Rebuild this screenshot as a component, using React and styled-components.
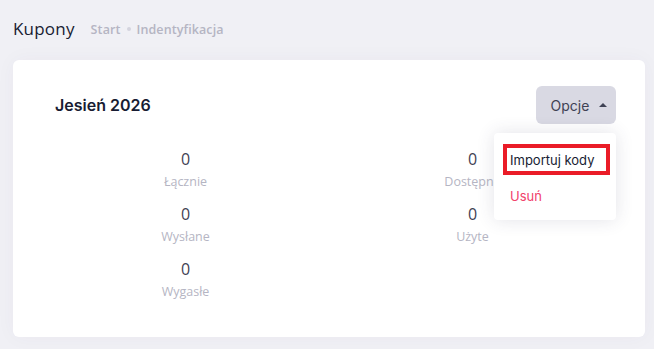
import React from "react";
import styled, { createGlobalStyle } from "styled-components";

const Global = createGlobalStyle`
  html, body { margin: 0; padding: 0; background: #f0f0f5; }
  body { font-family: "Open Sans", "Noto Sans", sans-serif; }
  * { box-sizing: border-box; }
`;

const Page = styled.div`
  width: 654px;
  height: 349px;
  padding: 14px 9px 0 13px;
  display: flex;
  flex-direction: column;
  gap: 18px;
`;

const Header = styled.div`
  display: flex;
  align-items: center;
  gap: 16px;
  height: 28px;
`;

const PageTitle = styled.h1`
  margin: 0;
  font-size: 17px;
  font-weight: 500;
  color: #181c32;
  letter-spacing: 0.2px;
`;

const Crumbs = styled.div`
  display: flex;
  align-items: center;
  gap: 6px;
  font-size: 12.5px;
  font-weight: 600;
  color: #b5b5c3;
  padding-top: 2px;
  letter-spacing: 0.1px;
`;

const Dot = styled.span`
  width: 4px;
  height: 4px;
  border-radius: 50%;
  background: #d4d4de;
`;

const Card = styled.div`
  background: #fff;
  border-radius: 6px;
  height: 277px;
  padding: 26px 29px 0 29px;
  box-shadow: 0 0 20px rgba(82, 63, 105, 0.04);
`;

const CardHead = styled.div`
  display: flex;
  justify-content: space-between;
  align-items: center;
  padding-left: 13px;
`;

const CardTitle = styled.h2`
  margin: 0;
  font-family: Inter, "Liberation Sans", sans-serif;
  font-size: 16px;
  font-weight: 600;
  color: #181c32;
`;

const Menu = styled.div`
  position: relative;
`;

const OptButton = styled.button`
  width: 80px;
  height: 38px;
  border: none;
  border-radius: 6px;
  background: #d9d9e3;
  color: #3f4254;
  font-family: Inter, "Liberation Sans", sans-serif;
  font-size: 14px;
  display: flex;
  align-items: center;
  justify-content: center;
  gap: 10px;
  padding: 0 0 0 6px;
`;

const Caret = styled.span`
  width: 0;
  height: 0;
  border-left: 4px solid transparent;
  border-right: 4px solid transparent;
  border-bottom: 4px solid #3f4254;
  margin-top: -1px;
`;

const Dropdown = styled.div`
  position: absolute;
  right: 0;
  top: 47px;
  width: 122px;
  height: 87px;
  background: #fff;
  border-radius: 4px;
  box-shadow: 0 0 18px rgba(60, 60, 90, 0.14);
  padding: 11px 6px 0 9px;
  display: flex;
  flex-direction: column;
  gap: 10px;
  z-index: 2;
`;

const Item = styled.div`
  height: ${(p) => (p.$focused ? "31px" : "auto")};
  border: ${(p) => (p.$focused ? "4px solid #ea1c27" : "none")};
  padding-left: ${(p) => (p.$focused ? "3px" : "7px")};
  display: flex;
  align-items: center;
  font-family: Inter, "Liberation Sans", sans-serif;
  font-size: 13px;
  color: ${(p) => (p.$danger ? "#f1416c" : "#181c32")};
  margin-top: ${(p) => (p.$danger ? "3px" : "0")};
`;

const Stats = styled.div`
  display: grid;
  grid-template-columns: 1fr 1fr;
  grid-auto-rows: 55px;
  margin-top: 25px;
`;

const Stat = styled.div`
  display: flex;
  flex-direction: column;
  align-items: center;
`;

const Value = styled.div`
  font-size: 16px;
  font-weight: 500;
  color: #3f4254;
  line-height: 20px;
`;

const Label = styled.div`
  font-size: 12.5px;
  color: #b5b5c3;
  line-height: 18px;
  margin-top: 4px;
`;

const stats = [
  ["0", "Łącznie"],
  ["0", "Dostępne"],
  ["0", "Wysłane"],
  ["0", "Użyte"],
  ["0", "Wygasłe"],
];

export default function App() {
  return (
    <>
      <Global />
      <Page>
        <Header>
          <PageTitle>Kupony</PageTitle>
          <Crumbs>
            <span>Start</span>
            <Dot />
            <span>Indentyfikacja</span>
          </Crumbs>
        </Header>
        <Card>
          <CardHead>
            <CardTitle>Jesień 2026</CardTitle>
            <Menu>
              <OptButton>
                Opcje <Caret />
              </OptButton>
              <Dropdown>
                <Item $focused>Importuj kody</Item>
                <Item $danger>Usuń</Item>
              </Dropdown>
            </Menu>
          </CardHead>
          <Stats>
            {stats.map(([v, l]) => (
              <Stat key={l}>
                <Value>{v}</Value>
                <Label>{l}</Label>
              </Stat>
            ))}
          </Stats>
        </Card>
      </Page>
    </>
  );
}
